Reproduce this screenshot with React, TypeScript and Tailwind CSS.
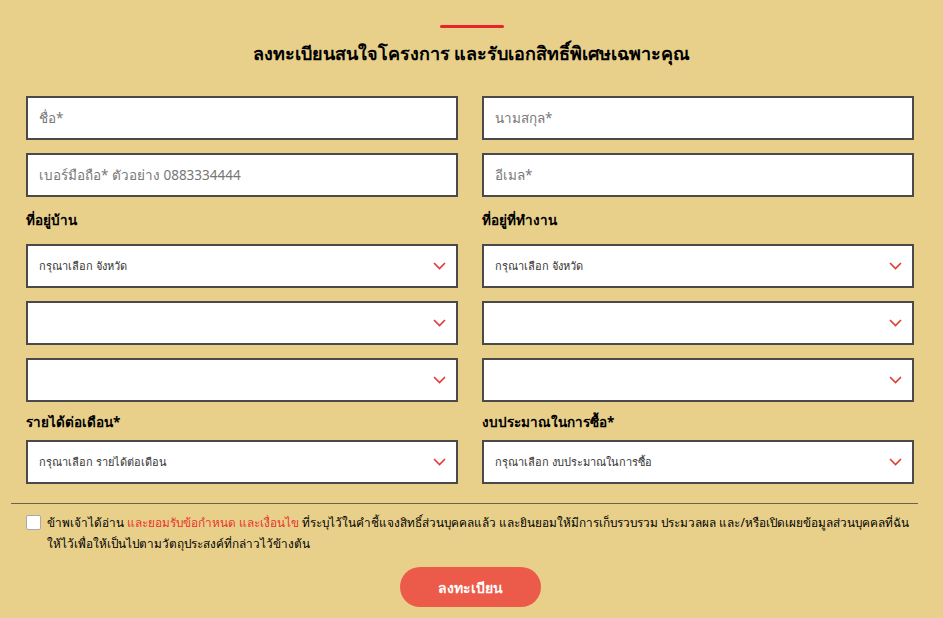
import React from 'react';

const Chevron: React.FC = () => (
  <svg width="13" height="8" viewBox="0 0 13 8" fill="none" className="shrink-0">
    <path d="M1 1l5.5 5.5L12 1" stroke="#e53935" strokeWidth="1.6" />
  </svg>
);

const TextInput: React.FC<{ placeholder: string }> = ({ placeholder }) => (
  <div className="h-[44px] bg-white border-2 border-[#4a4a4a] flex items-center px-[11px]">
    <span className="text-[13.5px] text-[#777]">{placeholder}</span>
  </div>
);

const SelectBox: React.FC<{ text?: string }> = ({ text }) => (
  <div className="h-[44px] bg-white border-2 border-[#4a4a4a] flex items-center justify-between pl-[11px] pr-[10px]">
    <span className="text-[11px] text-[#333]">{text}</span>
    <Chevron />
  </div>
);

const Label: React.FC<{ children: React.ReactNode }> = ({ children }) => (
  <label className="block text-[13.5px] font-bold text-black leading-[20px]">{children}</label>
);

const App: React.FC = () => {
  return (
    <div
      className="w-[943px] h-[618px] bg-[#e8d08b] overflow-hidden"
      style={{ fontFamily: '"Noto Sans", "Liberation Sans", sans-serif' }}
    >
      <div className="flex flex-col items-center pt-[25px]">
        <div className="w-[64px] h-[3px] bg-[#e8232b] rounded-full" />
        <h1 className="mt-[11px] text-[18px] font-bold text-black leading-[28px]">
          ลงทะเบียนสนใจโครงการ และรับเอกสิทธิ์พิเศษเฉพาะคุณ
        </h1>
      </div>

      {/* Form */}
      <div className="pl-[26px] mt-[29px] w-[914px]">
        <div className="grid grid-cols-2 gap-x-[24px] gap-y-[13px]">
          <TextInput placeholder="ชื่อ*" />
          <TextInput placeholder="นามสกุล*" />
          <TextInput placeholder="เบอร์มือถือ* ตัวอย่าง 0883334444" />
          <TextInput placeholder="อีเมล*" />
        </div>

        <div className="grid grid-cols-2 gap-x-[24px] mt-[13px]">
          <div className="flex flex-col">
            <Label>ที่อยู่บ้าน</Label>
            <div className="flex flex-col gap-[13px] mt-[14px]">
              <SelectBox text="กรุณาเลือก จังหวัด" />
              <SelectBox />
              <SelectBox />
            </div>
          </div>
          <div className="flex flex-col">
            <Label>ที่อยู่ที่ทำงาน</Label>
            <div className="flex flex-col gap-[13px] mt-[14px]">
              <SelectBox text="กรุณาเลือก จังหวัด" />
              <SelectBox />
              <SelectBox />
            </div>
          </div>
        </div>

        <div className="grid grid-cols-2 gap-x-[24px] mt-[10px]">
          <div className="flex flex-col">
            <Label>รายได้ต่อเดือน*</Label>
            <div className="mt-[8px]">
              <SelectBox text="กรุณาเลือก รายได้ต่อเดือน" />
            </div>
          </div>
          <div className="flex flex-col">
            <Label>งบประมาณในการซื้อ*</Label>
            <div className="mt-[8px]">
              <SelectBox text="กรุณาเลือก งบประมาณในการซื้อ" />
            </div>
          </div>
        </div>
      </div>

      <div className="ml-[11px] w-[907px] h-px bg-[#6b6350] mt-[19px]" />

      <div className="flex items-start pl-[26px] pr-[25px] mt-[8px]">
        <div className="w-[15px] h-[15px] bg-white border border-[#aaa] rounded-[2px] mt-[3px] shrink-0" />
        <p className="ml-[6px] text-[11.8px] leading-[21px] text-black">
          <span className="whitespace-nowrap">
            ข้าพเจ้าได้อ่าน <span className="text-[#e8322b]">และยอมรับข้อกำหนด และเงื่อนไข</span> ที่ระบุไว้ในคำชี้แจงสิทธิ์ส่วนบุคคลแล้ว และยินยอมให้มีการเก็บรวบรวม ประมวลผล และ/หรือเปิดเผยข้อมูลส่วนบุคคลที่ฉัน
          </span>
          <br />
          ให้ไว้เพื่อให้เป็นไปตามวัตถุประสงค์ที่กล่าวไว้ข้างต้น
        </p>
      </div>

      <div className="flex justify-center mt-[13px]">
        <button className="w-[141px] h-[40px] rounded-full bg-[#ec5b4a] text-white text-[14px] font-bold -ml-[3px]">
          ลงทะเบียน
        </button>
      </div>
    </div>
  );
};

export default App;
